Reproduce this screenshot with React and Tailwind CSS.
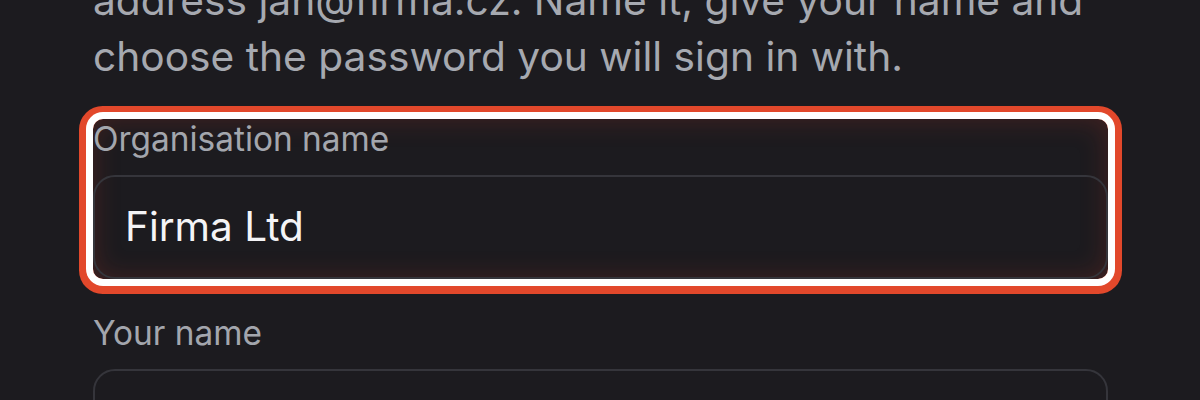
import React from 'react';

function Field({ label, value, highlighted }) {
  return (
    <div
      className={`flex flex-col gap-4 rounded-[10px] ${
        highlighted
          ? 'shadow-[inset_0_0_28px_rgba(220,60,40,0.22),0_0_0_7px_#ffffff,0_1px_0_14px_#e2482b]'
          : ''
      }`}
    >
      <label className="text-[33.4px] leading-[40px] text-[#a3a6ad]">{label}</label>
      <div className="h-[104px] rounded-[22px] border-2 border-[#35353b] flex items-center px-[30px]">
        <span className="text-[40.5px] leading-[48px] text-[#f4f4f6]">{value}</span>
      </div>
    </div>
  );
}

export default function App() {
  return (
    <div className="w-[1200px] h-[400px] overflow-hidden bg-[#1c1b1f] font-['Inter','Noto_Sans',sans-serif]">
      <div className="ml-[93px] w-[1015px] -mt-[83px] flex flex-col gap-[34px]">
        <p className="text-[40.7px] leading-[56px] text-[#a6a9b0]">
          A new organisation will be created for the
          <br />
          address jan@firma.cz. Name it, give your name and
          <br />
          choose the password you will sign in with.
        </p>
        <Field label="Organisation name" value="Firma Ltd" highlighted />
        <Field label="Your name" value="" />
      </div>
    </div>
  );
}
